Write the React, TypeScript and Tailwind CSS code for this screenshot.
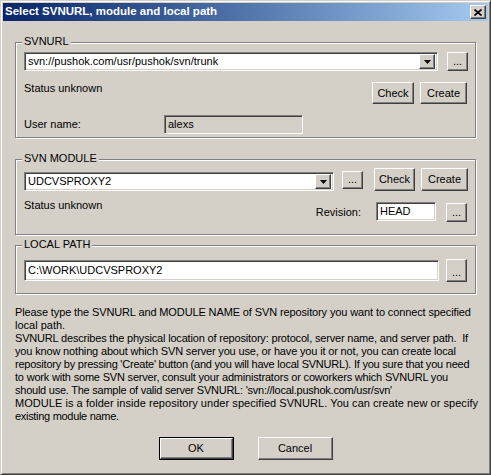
import React from "react";

const sunken =
  "border border-t-[#808080] border-l-[#808080] border-b-white border-r-white shadow-[inset_1px_1px_0_#404040,inset_-1px_-1px_0_#d4d0c8]";
const raised =
  "border border-t-white border-l-white border-b-[#404040] border-r-[#404040] shadow-[inset_-1px_-1px_0_#808080] bg-[#d4d0c8]";

function Btn({ w, h, children, className = "" }: { w: string; h: string; children: React.ReactNode; className?: string }) {
  return (
    <div className={`${raised} ${w} ${h} flex items-center justify-center shrink-0 ${className}`}>
      {children}
    </div>
  );
}

function Dots({ className = "" }: { className?: string }) {
  return (
    <div className={`${raised} w-[21px] flex items-end justify-center pb-[3px] shrink-0 leading-none ${className}`}>
      <span className="text-[11px] leading-none">...</span>
    </div>
  );
}

function Combo({ w, value, className = "" }: { w: string; value: string; className?: string }) {
  return (
    <div className={`${sunken} bg-white ${w} h-[19px] flex items-center justify-between pl-[3px] pr-[2px] shrink-0 ${className}`}>
      <span className="whitespace-nowrap">{value}</span>
      <div className={`${raised} w-[16px] h-[15px] flex items-center justify-center`}>
        <svg width="7" height="4" viewBox="0 0 7 4">
          <path d="M0 0H7L3.5 4Z" fill="#000" />
        </svg>
      </div>
    </div>
  );
}

function Group({ label, h, className = "", children }: { label: string; h: string; className?: string; children: React.ReactNode }) {
  return (
    <div className={`relative w-[461px] ${h} border border-[#808080] shadow-[inset_1px_1px_0_#fff,1px_1px_0_#fff] ${className}`}>
      <span className="absolute left-[6px] top-[-8px] px-[2px] bg-[#d4d0c8] leading-[13px]">{label}</span>
      {children}
    </div>
  );
}

const lines: { t: string; c: string }[] = [
  { t: "Please type the SVNURL and MODULE NAME of SVN repository you want to connect specified", c: "tracking-[-0.12px]" },
  { t: "local path.", c: "" },
  { t: "SVNURL describes the physical location of repository: protocol, server name, and server path.  If", c: "tracking-[-0.18px]" },
  { t: "you know nothing about which SVN server you use, or have you it or not, you can create local", c: "tracking-[-0.16px]" },
  { t: "repository by pressing 'Create' button (and you will have local SVNURL). If you sure that you need", c: "tracking-[-0.23px]" },
  { t: "to work with some SVN server, consult your administrators or coworkers which SVNURL you", c: "tracking-[-0.19px]" },
  { t: "should use. The sample of valid server SVNURL: 'svn://local.pushok.com/usr/svn'", c: "tracking-[-0.24px]" },
  { t: "MODULE is a folder inside repository under specified SVNURL. You can create new or specify", c: "tracking-[0.05px]" },
  { t: "existing module name.", c: "tracking-[-0.3px]" },
];

export default function App() {
  return (
    <div
      className="w-[491px] h-[475px] bg-[#d4d0c8] border border-t-[#d4d0c8] border-l-[#d4d0c8] border-b-[#404040] border-r-[#404040] shadow-[inset_1px_1px_0_#fff,inset_-1px_-1px_0_#808080] p-[2px] text-black text-[11px] leading-[13px] overflow-hidden"
      style={{ fontFamily: '"Liberation Sans", Arial, sans-serif' }}
    >
      {/* Title bar */}
      <div className="h-[18px] bg-gradient-to-r from-[#0a246a] to-[#a6caf0] flex items-center justify-between pl-[2px] pr-[2px]">
        <span className="text-white font-bold text-[11.5px] leading-none whitespace-nowrap">
          Select SVNURL, module and local path
        </span>
        <div className={`${raised} w-[16px] h-[14px] flex items-center justify-center`}>
          <svg width="8" height="7" viewBox="0 0 8 7">
            <path d="M0.5 0.5L7.5 6.5M7.5 0.5L0.5 6.5" stroke="#000" strokeWidth="1.6" />
          </svg>
        </div>
      </div>

      <div className="pl-[12px] pt-[21px]">
        {/* SVNURL */}
        <Group label="SVNURL" h="h-[96px]">
          <div className="pl-[8px] pr-[8px] pt-[9px]">
            <div className="flex items-start">
              <Combo w="w-[414px]" value="svn://pushok.com/usr/pushok/svn/trunk" />
              <Dots className="h-[19px] ml-[9px]" />
            </div>
            <div className="flex items-start mt-[11px]">
              <span className="flex-1 whitespace-nowrap">Status unknown</span>
              <Btn w="w-[42px]" h="h-[22px]">Check</Btn>
              <Btn w="w-[47px]" h="h-[22px]" className="ml-[6px]">Create</Btn>
            </div>
            <div className="flex items-center mt-[11px]">
              <span className="w-[140px] whitespace-nowrap">User name:</span>
              <div className={`${sunken} bg-[#d4d0c8] w-[139px] h-[19px] flex items-center pl-[3px]`}>alexs</div>
            </div>
          </div>
        </Group>

        {/* SVN MODULE */}
        <Group label="SVN MODULE" h="h-[76px]" className="mt-[21px]">
          <div className="pl-[8px] pr-[8px] pt-[8px]">
            <div className="flex items-start">
              <Combo w="w-[310px]" value="UDCVSPROXY2" className="mt-[4px]" />
              <Dots className="h-[18px] ml-[8px] mt-[3px]" />
              <Btn w="w-[41px]" h="h-[23px]" className="ml-[11px]">Check</Btn>
              <Btn w="w-[47px]" h="h-[23px]" className="ml-[6px]">Create</Btn>
            </div>
            <div className="flex items-start mt-[8px]">
              <span className="flex-1 whitespace-nowrap">Status unknown</span>
              <span className="mt-[7px] whitespace-nowrap mr-[15px]">Revision:</span>
              <div className={`${sunken} bg-white w-[60px] h-[19px] flex items-center pl-[3px] mt-[3px]`}>HEAD</div>
              <Dots className="h-[19px] ml-[10px] mt-[4px]" />
            </div>
          </div>
        </Group>

        {/* LOCAL PATH */}
        <Group label="LOCAL PATH" h="h-[49px]" className="mt-[10px]">
          <div className="pl-[8px] pr-[8px] pt-[13px] flex items-start">
            <div className={`${sunken} bg-white w-[416px] h-[21px] flex items-center pl-[3px] mt-[1px]`}>C:\WORK\UDCVSPROXY2</div>
            <Dots className="h-[23px] ml-[7px]" />
          </div>
        </Group>

        {/* Description */}
        <div className="mt-[12px] whitespace-nowrap">
          {lines.map((l, i) => (
            <div key={i} className={`whitespace-pre ${l.c}`}>{l.t}</div>
          ))}
        </div>
      </div>

      {/* Buttons */}
      <div className="flex justify-center gap-[24px] mt-[14px]">
        <div className="border border-black w-[75px] h-[23px]">
          <div className={`${raised} w-full h-full flex items-center justify-center`}>OK</div>
        </div>
        <Btn w="w-[75px]" h="h-[23px]">Cancel</Btn>
      </div>
    </div>
  );
}
